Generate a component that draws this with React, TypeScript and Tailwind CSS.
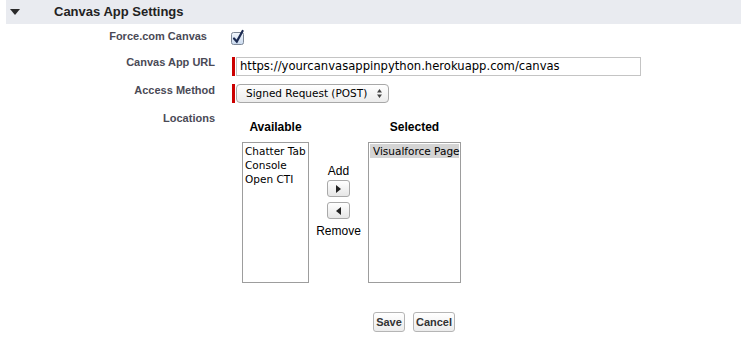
const fieldFont = "font-['DejaVu_Sans','Liberation_Sans',sans-serif]";

const Label = ({ children, className = "" }: { children: React.ReactNode; className?: string }) => (
  <div className={`w-[216px] shrink-0 text-right text-[11px] font-bold leading-[13px] text-[#4a4a56] ${className}`}>
    {children}
  </div>
);

const Required = () => <div className="h-[19px] w-[3px] shrink-0 bg-[#cc0000]" />;

const ArrowButton = ({ dir }: { dir: "left" | "right" }) => (
  <button className="flex h-[17px] w-[23px] items-center justify-center rounded-[3px] border border-[#a9a9a9] bg-gradient-to-b from-white to-[#e6e6e6]">
    <svg width="5" height="8" viewBox="0 0 5 8">
      {dir === "right" ? <path d="M0 0L5 4L0 8Z" fill="#222" /> : <path d="M5 0L0 4L5 8Z" fill="#222" />}
    </svg>
  </button>
);

const ListBox = ({ items, selected }: { items: string[]; selected?: string }) => (
  <div className={`mt-[8px] h-[141px] border border-[#9d9d9d] bg-white px-[1px] py-[1px] text-[10.5px] leading-[14px] text-black ${fieldFont}`}>
    {items.map((item) => (
      <div key={item} className={`whitespace-nowrap pl-[1px] ${item === selected ? "bg-[#d4d4d4] pl-[3px]" : ""}`}>
        {item}
      </div>
    ))}
  </div>
);

export default function App() {
  return (
    <div className="h-[361px] w-[741px] overflow-hidden bg-white font-['Liberation_Sans',Arial,sans-serif] text-[#222]">
      {/* HEADER */}
      <div className="ml-[6px] flex h-[24px] items-center bg-[#e9ebf0]">
        <svg className="ml-[4px]" width="10" height="6" viewBox="0 0 10 6">
          <path d="M0 0H10L5 6Z" fill="#2a2a2a" />
        </svg>
        <h2 className="ml-[34px] text-[13px] font-bold text-[#222]">Canvas App Settings</h2>
      </div>

      {/* FORM */}
      <div className="mt-[6px]">
        <div className="flex h-[26px] items-start">
          <Label className="pr-[9px]">Force.com Canvas</Label>
          <svg className="ml-[15px] -mt-[1px]" width="15" height="16" viewBox="0 0 15 16">
            <defs>
              <linearGradient id="cb" x1="0" y1="0" x2="0" y2="1">
                <stop offset="0" stopColor="#f4f8fd" />
                <stop offset="1" stopColor="#c9d9ee" />
              </linearGradient>
            </defs>
            <rect x="0.5" y="3.5" width="12" height="12" rx="2" fill="url(#cb)" stroke="#7d8796" />
            <path d="M3 9.5L5.8 12.6L11.6 2" fill="none" stroke="#1c2b52" strokeWidth="2.2" strokeLinecap="round" />
          </svg>
        </div>

        <div className="flex h-[28px] items-start">
          <Label className="pr-[1px]">Canvas App URL</Label>
          <div className="ml-[16px] mt-[1px] flex">
            <Required />
            <div className={`ml-[1px] flex h-[19px] w-[405px] items-center border border-[#c4c4c4] px-[3px] text-[11.6px] text-black ${fieldFont}`}>
              https://yourcanvasappinpython.herokuapp.com/canvas
            </div>
          </div>
        </div>

        <div className="flex h-[28px] items-start">
          <Label className="pr-[1px]">Access Method</Label>
          <div className="ml-[16px] flex">
            <Required />
            <div className={`ml-[1px] flex h-[19px] w-[153px] items-center justify-between rounded-[4px] border border-[#a8a8a8] bg-gradient-to-b from-white to-[#ececec] pl-[9px] pr-[6px] text-[10.5px] text-black ${fieldFont}`}>
              <span>Signed Request (POST)</span>
              <svg width="5" height="9" viewBox="0 0 5 9">
                <path d="M0 3.5L2.5 0L5 3.5Z M0 5.5L2.5 9L5 5.5Z" fill="#444" />
              </svg>
            </div>
          </div>
        </div>

        <div className="flex items-start">
          <Label className="pr-[1px]">Locations</Label>
          <div className="ml-[26px] mt-[8px] flex items-start">
            <div className="w-[67px]">
              <div className="text-center text-[12px] font-bold leading-[14px] text-black">Available</div>
              <ListBox items={["Chatter Tab", "Console", "Open CTI"]} />
            </div>
            <div className="flex w-[59px] flex-col items-center pt-[44px] text-[12px] leading-[14px] text-black">
              <span>Add</span>
              <div className="mt-[2px]">
                <ArrowButton dir="right" />
              </div>
              <div className="mt-[5px]">
                <ArrowButton dir="left" />
              </div>
              <span className="mt-[5px]">Remove</span>
            </div>
            <div className="w-[93px]">
              <div className="text-center text-[12px] font-bold leading-[14px] text-black">Selected</div>
              <ListBox items={["Visualforce Page"]} selected="Visualforce Page" />
            </div>
          </div>
        </div>

        {/* BUTTONS */}
        <div className="ml-[373px] mt-[29px] flex gap-[8px]">
          <button className="h-[20px] w-[32px] rounded-[3px] border border-[#b5b5b5] bg-gradient-to-b from-white to-[#ececec] text-[11px] font-bold text-[#333]">
            Save
          </button>
          <button className="h-[20px] w-[42px] rounded-[3px] border border-[#b5b5b5] bg-gradient-to-b from-white to-[#ececec] text-[11px] font-bold text-[#333]">
            Cancel
          </button>
        </div>
      </div>
    </div>
  );
}
